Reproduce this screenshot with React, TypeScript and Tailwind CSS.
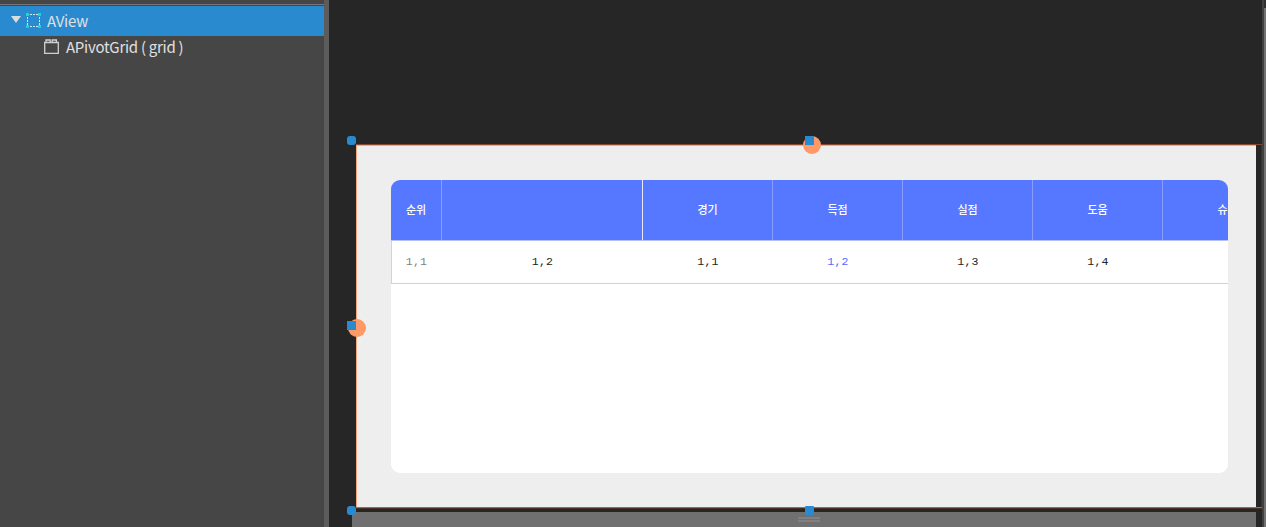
const columns = [
  { title: '순위', value: '1,1', size: 'w-[51px]', line: 'border-[#8b9dff]', color: 'text-[#808080]' },
  { title: '', value: '1,2', size: 'w-[201px]', line: 'border-[#e6e9ff]', color: 'text-[#222222]' },
  { title: '경기', value: '1,1', size: 'w-[130px]', line: 'border-[#8b9dff]', color: 'text-[#222222]' },
  { title: '득점', value: '1,2', size: 'w-[130px]', line: 'border-[#8b9dff]', color: 'text-[#4a6cfc]' },
  { title: '실점', value: '1,3', size: 'w-[130px]', line: 'border-[#8b9dff]', color: 'text-[#222222]' },
  { title: '도움', value: '1,4', size: 'w-[130px]', line: 'border-[#8b9dff]', color: 'text-[#222222]' },
  { title: '슈팅', value: '', size: 'w-[130px]', line: 'border-[#8b9dff]', color: 'text-[#222222]' },
];

function ViewIcon() {
  return (
    <svg width="16" height="16" viewBox="0 0 16 16" className="shrink-0">
      <g stroke="#d6e4ee" strokeWidth="1" fill="none">
        <path d="M4 1.5H12M4 13.5H12" strokeDasharray="2 1" />
        <path d="M1.5 4V12M13.5 4V12" strokeDasharray="2 1" />
      </g>
      <path d="M0 0h3v3H0zM12 0h3v3h-3zM0 12h3v3H0zM12 12h3v3h-3z" fill="#1ed7c6" />
    </svg>
  );
}

function GridIcon() {
  return (
    <svg width="16" height="16" viewBox="0 0 16 16" className="shrink-0">
      <path d="M0.7 3.5H14.3V14.3H0.7ZM2 3.5V1H6.2V3.5M8.2 3.5V1H12.4V3.5" fill="none" stroke="#d0d0d0" strokeWidth="1.3" />
    </svg>
  );
}

function Tree() {
  return (
    <aside className="w-[324px] shrink-0 bg-[#464646] pt-1 text-[15px] text-[#e0e0e0]">
      <div className="h-px bg-[#777777]" />
      <div className="mt-px flex h-[30px] items-center bg-[#2a8ad0] pl-[11px]">
        <svg width="10" height="7" viewBox="0 0 10 7" className="-mt-1 shrink-0">
          <path d="M0 0H10L5 7Z" fill="#dddddd" />
        </svg>
        <span className="ml-[5px]"><ViewIcon /></span>
        <span className="ml-[5px] leading-[30px] tracking-[-0.2px]">AView</span>
      </div>
      <div className="flex h-6 items-center pl-[44px]">
        <span className="-mt-0.5"><GridIcon /></span>
        <span className="-mt-0.5 ml-1.5 whitespace-pre leading-6 tracking-[-0.27px]">APivotGrid ( grid )</span>
      </div>
    </aside>
  );
}

function PivotGrid() {
  return (
    <div className="h-[293px] w-[837px] overflow-hidden rounded-[9px] bg-white">
      <div className="flex h-[61px] w-[902px] border-b border-[#b5c0fb] bg-[#5677ff] text-[11px] font-medium text-white">
        {columns.map((c, i) => (
          <div key={i} className={`flex shrink-0 items-center justify-center border-r pb-px ${c.size} ${c.line}`}>
            {c.title}
          </div>
        ))}
      </div>
      <div className="flex h-[43px] w-[902px] border-b border-l border-[#d3d3d3] font-['Liberation_Mono',monospace] text-[11.5px] tracking-[0.3px]">
        {columns.map((c, i) => (
          <div key={i} className={`flex shrink-0 items-center justify-center ${c.size} ${c.color} ${i === 0 ? '-ml-px' : ''}`}>
            {c.value}
          </div>
        ))}
      </div>
    </div>
  );
}

export default function App() {
  return (
    <div className="flex h-[527px] w-[1266px] overflow-hidden bg-[#262626] font-['Noto_Sans_CJK_KR',sans-serif]">
      <Tree />
      <div className="w-[5px] shrink-0 bg-[#5c5c5c]" />
      <main className="relative w-[933px] shrink-0 overflow-hidden pt-[144px]">
        <div className="ml-[27px] h-px bg-[#87492d]" />
        <div className="ml-[27px] flex h-[362px]">
          <div className="w-[900px] border-l border-t border-[#f8a77e] bg-[#eeeeee] pl-[34px] pt-[34px]">
            <PivotGrid />
          </div>
          <div className="w-[5px]" />
          <div className="w-px bg-[#4a3023]" />
        </div>
        <div className="ml-[27px] h-px bg-[#b0673f]" />
        <div className="ml-[27px] h-px bg-[#4a3023]" />
        <div className="ml-[23px] mt-[3px] flex h-[15px] w-[904px] flex-col items-center bg-[#707070] pt-[5px]">
          <div className="mr-[-10px] h-0.5 w-[22px] bg-[#808080]" />
          <div className="mr-[-10px] mt-px h-0.5 w-[22px] bg-[#808080]" />
        </div>

        <div className="absolute left-[474px] top-[136px] size-[18px] rounded-full bg-[#ff9966]" />
        <div className="absolute left-[19px] top-[319px] size-[18px] rounded-full bg-[#ff9966]" />
        <div className="absolute left-[18px] top-[136px] size-[9px] rounded-[3px] bg-[#2a8ad0]" />
        <div className="absolute left-[476px] top-[136px] size-[9px] bg-[#2a8ad0]" />
        <div className="absolute left-[18px] top-[321px] size-[9px] bg-[#2a8ad0]" />
        <div className="absolute left-[18px] top-[506px] size-[9px] rounded-[3px] bg-[#2a8ad0]" />
        <div className="absolute left-[476px] top-[506px] size-[9px] rounded-[1px] bg-[#2a8ad0]" />
      </main>
      <div className="w-0.5 shrink-0 bg-[#404040]" />
      <div className="w-0.5 shrink-0 bg-[#303030] pt-2">
        <div className="h-full bg-[#727272]" />
      </div>
    </div>
  );
}
